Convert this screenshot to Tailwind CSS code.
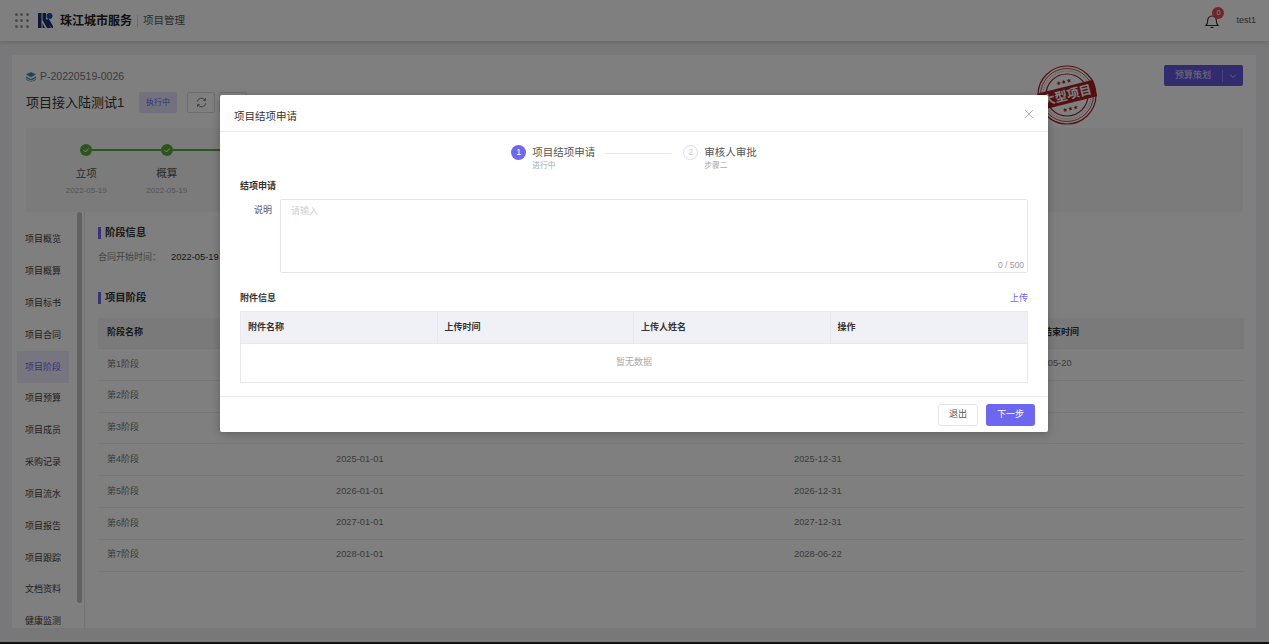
<!DOCTYPE html>
<html lang="zh-CN">
<head>
  <meta charset="UTF-8">
  <meta name="viewport" content="width=device-width, initial-scale=1.0">
  <title>项目管理</title>
  <script src="https://cdn.jsdelivr.net/npm/@tailwindcss/browser@4"></script>
</head>
<body class="relative h-[644px] overflow-hidden bg-[#f0f0f6] font-['Liberation_Sans','Noto_Sans_CJK_SC',sans-serif] text-[#333]">

  <!-- Top bar -->
  <header class="h-[41px] bg-white shadow-[0_1px_4px_rgba(0,0,0,0.15)] flex items-center pl-[15px] pr-[13px]">
    <div class="grid grid-cols-3 gap-[3px] w-[13px] mr-[10px]">
      <i class="w-[3px] h-[3px] rounded-full bg-[#999]"></i><i class="w-[3px] h-[3px] rounded-full bg-[#999]"></i><i class="w-[3px] h-[3px] rounded-full bg-[#999]"></i>
      <i class="w-[3px] h-[3px] rounded-full bg-[#999]"></i><i class="w-[3px] h-[3px] rounded-full bg-[#999]"></i><i class="w-[3px] h-[3px] rounded-full bg-[#999]"></i>
      <i class="w-[3px] h-[3px] rounded-full bg-[#999]"></i><i class="w-[3px] h-[3px] rounded-full bg-[#999]"></i><i class="w-[3px] h-[3px] rounded-full bg-[#999]"></i>
    </div>
    <svg class="w-[15px] h-[15px] mr-[7px]" viewBox="0 0 15 15">
      <path d="M0 0h3.500v15H0zM4.500 0H8v5.500L13 15H9L4.500 7zM4.500 10l2.500 5H4.500z" fill="#1c2f70"/>
      <path d="M7.500 8l3-2.500L15 13v2h-1z" fill="#1c2f70"/>
      <circle cx="11.500" cy="3" r="3" fill="#1c4fa8"/>
    </svg>
    <span class="text-[12px] font-bold text-[#222]">珠江城市服务</span>
    <span class="w-px h-[12px] bg-[#ddd] mx-[5px]"></span>
    <span class="text-[10.500px] text-[#555]">项目管理</span>
    <div class="ml-auto relative mr-[16px]">
      <svg class="w-[16px] h-[16px]" viewBox="0 0 16 16" fill="none" stroke="#333" stroke-width="1.100">
        <path d="M2 12.500c1.200-1 1.600-2 1.600-4.500 0-3 1.800-5 4.400-5s4.400 2 4.400 5c0 2.500.4 3.500 1.600 4.500z"/>
        <path d="M6.500 14.500h3"/>
      </svg>
      <span class="absolute -top-[6px] left-[8px] w-[12px] h-[12px] rounded-full bg-[#e5484d] text-white text-[7.500px] leading-[12px] text-center">0</span>
    </div>
    <span class="text-[9px] text-[#555]">test1</span>
  </header>

  <!-- Project card -->
  <main class="absolute left-[12px] top-[55px] w-[1244px] h-[573px] bg-white overflow-hidden">
    <div class="px-[14px] pt-[15px]">
      <div class="flex items-center h-[14px] text-[10.500px] text-[#777]">
        <svg class="w-[10px] h-[10px] mr-[4px]" viewBox="0 0 10 10"><path d="M5 0l5 2.600-5 2.600L0 2.600z" fill="#3b8fb0"/><path d="M0 4.500l5 2.600 5-2.600v1.400L5 8.500 0 5.900z" fill="#3b8fb0"/><path d="M0 6.800l5 2.600 5-2.600V8L5 10 0 8z" fill="#5aa5c2"/></svg>
        P-20220519-0026
      </div>
      <div class="flex items-center mt-[8px] h-[21px]">
        <h1 class="text-[13px] text-[#333] w-[113px]">项目接入陆测试1</h1>
        <span class="w-[38px] h-[21px] rounded-[2px] bg-[#e4e3fb] text-[#6c66f0] text-[8px] leading-[21px] text-center">执行中</span>
        <span class="ml-[10px] w-[28px] h-[21px] rounded-[2px] border border-[#ddd] flex items-center justify-center">
          <svg class="w-[11px] h-[11px]" viewBox="0 0 12 12" fill="none" stroke="#666" stroke-width="0.900"><path d="M1.200 5.200A4.800 4.800 0 0 1 10 3.500M10.800 6.800A4.800 4.800 0 0 1 2 8.500"/><path d="M10.300 1.200V3.700H7.800M1.700 10.800V8.300H4.200"/></svg>
        </span>
        <span class="ml-[4px] w-[28px] h-[21px] rounded-[2px] border border-[#ddd]"></span>
      </div>
      <!-- Stage progress -->
      <div class="mt-[15px] h-[84px] -mr-px bg-[#f6f6f8] flex pl-[20px] pt-[16px]">
        <div class="w-[80.500px] flex flex-col items-center">
          <div class="relative w-full flex justify-center">
            <span class="w-[12px] h-[12px] rounded-full bg-[#5aa83c] flex items-center justify-center"><svg class="w-[8px] h-[8px]" viewBox="0 0 8 8" fill="none" stroke="#fff"><path d="M1.500 4l2 2 3-3.500"/></svg></span>
            <span class="absolute left-[46px] top-[5px] w-[69px] h-[1.500px] bg-[#5aa83c]"></span>
          </div>
          <span class="mt-[10px] text-[10.500px] text-[#555]">立项</span>
          <span class="mt-[3px] text-[8px] text-[#aaa]">2022-05-19</span>
        </div>
        <div class="w-[80.500px] flex flex-col items-center">
          <div class="relative w-full flex justify-center">
            <span class="w-[12px] h-[12px] rounded-full bg-[#5aa83c] flex items-center justify-center"><svg class="w-[8px] h-[8px]" viewBox="0 0 8 8" fill="none" stroke="#fff"><path d="M1.500 4l2 2 3-3.500"/></svg></span>
            <span class="absolute left-[46px] top-[5px] w-[60px] h-[1.500px] bg-[#5aa83c]"></span>
          </div>
          <span class="mt-[10px] text-[10.500px] text-[#555]">概算</span>
          <span class="mt-[3px] text-[8px] text-[#aaa]">2022-05-19</span>
        </div>
      </div>
    </div>

    <div class="flex h-[416px] mt-[2px] pl-[5px]">
      <!-- Side menu -->
      <nav class="w-[52px] pt-[10px] text-[9px] text-[#444] shrink-0">
        <a class="h-[31.850px] flex items-center justify-center">项目概览</a>
        <a class="h-[31.850px] flex items-center justify-center">项目概算</a>
        <a class="h-[31.850px] flex items-center justify-center">项目标书</a>
        <a class="h-[31.850px] flex items-center justify-center">项目合同</a>
        <a class="h-[31.850px] flex items-center justify-center bg-[#eeedfd] text-[#6c66f0]">项目阶段</a>
        <a class="h-[31.850px] flex items-center justify-center">项目预算</a>
        <a class="h-[31.850px] flex items-center justify-center">项目成员</a>
        <a class="h-[31.850px] flex items-center justify-center">采购记录</a>
        <a class="h-[31.850px] flex items-center justify-center">项目流水</a>
        <a class="h-[31.850px] flex items-center justify-center">项目报告</a>
        <a class="h-[31.850px] flex items-center justify-center">项目跟踪</a>
        <a class="h-[31.850px] flex items-center justify-center">文档资料</a>
        <a class="h-[31.850px] flex items-center justify-center">健康监测</a>
      </nav>
      <div class="w-[5px] h-[391px] -mt-[2px] ml-[8px] rounded-full bg-[#c4c4c4] shrink-0"></div>
      <div class="w-px ml-[2px] -mt-[2px] bg-[#e6e6e6] shrink-0"></div>

      <section class="ml-[13px] w-[1146px]">
        <h2 class="mt-[13px] flex items-center h-[12px] text-[10.300px] font-bold text-[#333]"><i class="w-[3px] h-[12px] bg-[#6c66f0] mr-[4px]"></i>阶段信息</h2>
        <div class="mt-[13px] h-[12px] flex items-center text-[9px] text-[#888]">
          <span class="w-[73px]">合同开始时间：</span><span class="text-[9.300px] text-[#333]">2022-05-19</span>
        </div>
        <h2 class="mt-[28px] flex items-center h-[12px] text-[10.300px] font-bold text-[#333]"><i class="w-[3px] h-[12px] bg-[#6c66f0] mr-[4px]"></i>项目阶段</h2>
        <div class="mt-[14px] text-[9px] text-[#777]">
          <div class="grid grid-cols-[229px_458px_249px_210px] h-[31px] items-center bg-[#f5f5f7] font-bold text-[#333] border-b border-[#eee]">
            <span class="pl-[9px]">阶段名称</span><span class="pl-[9px]">开始时间</span><span></span><span class="pl-[9px]">结束时间</span>
          </div>
          <div class="grid grid-cols-[229px_458px_249px_210px] h-[31.800px] items-center border-b border-[#eee]">
            <span class="pl-[9px]">第1阶段</span><span class="pl-[9px] text-[9.300px]">2022-05-20</span><span></span><span class="-ml-[10px] text-[9.300px]">2022-05-20</span>
          </div>
          <div class="grid grid-cols-[229px_458px_249px_210px] h-[31.800px] items-center border-b border-[#eee]">
            <span class="pl-[9px]">第2阶段</span><span class="pl-[9px] text-[9.300px]">2023-01-01</span><span class="pl-[9px] text-[9.300px]">2023-12-31</span><span></span>
          </div>
          <div class="grid grid-cols-[229px_458px_249px_210px] h-[31.800px] items-center border-b border-[#eee]">
            <span class="pl-[9px]">第3阶段</span><span class="pl-[9px] text-[9.300px]">2024-01-01</span><span class="pl-[9px] text-[9.300px]">2024-12-31</span><span></span>
          </div>
          <div class="grid grid-cols-[229px_458px_249px_210px] h-[31.800px] items-center border-b border-[#eee]">
            <span class="pl-[9px]">第4阶段</span><span class="pl-[9px] text-[9.300px]">2025-01-01</span><span class="pl-[9px] text-[9.300px]">2025-12-31</span><span></span>
          </div>
          <div class="grid grid-cols-[229px_458px_249px_210px] h-[31.800px] items-center border-b border-[#eee]">
            <span class="pl-[9px]">第5阶段</span><span class="pl-[9px] text-[9.300px]">2026-01-01</span><span class="pl-[9px] text-[9.300px]">2026-12-31</span><span></span>
          </div>
          <div class="grid grid-cols-[229px_458px_249px_210px] h-[31.800px] items-center border-b border-[#eee]">
            <span class="pl-[9px]">第6阶段</span><span class="pl-[9px] text-[9.300px]">2027-01-01</span><span class="pl-[9px] text-[9.300px]">2027-12-31</span><span></span>
          </div>
          <div class="grid grid-cols-[229px_458px_249px_210px] h-[31.800px] items-center border-b border-[#eee]">
            <span class="pl-[9px]">第7阶段</span><span class="pl-[9px] text-[9.300px]">2028-01-01</span><span class="pl-[9px] text-[9.300px]">2028-06-22</span><span></span>
          </div>
        </div>
      </section>
    </div>

    <!-- Stamp -->
    <svg class="absolute left-[1025px] top-[10px] w-[60px] h-[60px]" viewBox="0 0 60 60" fill="none" stroke="#a81e22">
      <circle cx="30" cy="30" r="29" stroke-width="1.200"/>
      <circle cx="30" cy="30" r="26.500" stroke-width="0.800"/>
      <circle cx="30" cy="30" r="24" stroke-width="0.500" stroke-dasharray="1 1"/>
      <circle cx="30" cy="30" r="21" stroke-width="1.200"/>
      <g transform="rotate(-14 30 30)">
        <rect x="1" y="21.500" width="58" height="17" fill="#a81e22" stroke="none"/>
        <text x="30" y="34.500" text-anchor="middle" fill="#fff" stroke="none" font-size="12.500" font-family="'Noto Sans CJK SC',serif" font-weight="700">大型项目</text>
        <text x="30" y="18.500" text-anchor="middle" fill="#a81e22" stroke="none" font-size="6" font-family="'DejaVu Sans',sans-serif">★★★</text>
        <text x="30" y="46" text-anchor="middle" fill="#a81e22" stroke="none" font-size="6" font-family="'DejaVu Sans',sans-serif">★★★</text>
      </g>
    </svg>

    <!-- Split button -->
    <div class="absolute left-[1152px] top-[10px] w-[79px] h-[21px] rounded-[2px] bg-[#6259de] flex items-center text-white/80 text-[9px]">
      <span class="w-[58px] text-center">预算策划</span>
      <span class="w-px h-[12px] bg-white/30"></span>
      <svg class="w-[8px] h-[8px] ml-[6px]" viewBox="0 0 8 8" fill="none" stroke="#fff" stroke-opacity="0.700" stroke-width="0.800"><path d="M1 2.500l3 3 3-3"/></svg>
    </div>
  </main>

  <div class="absolute left-0 bottom-0 w-full h-[2px] bg-[#222]"></div>

  <!-- Modal overlay -->
  <div class="absolute inset-0 bg-black/50">
    <div class="absolute left-[220px] top-[95px] w-[828px] h-[337px] bg-white rounded-[2px] shadow-[0_2px_8px_rgba(0,0,0,0.25)] flex flex-col">
      <div class="h-[37px] shrink-0 border-b border-[#e8e8ee] flex items-center justify-between pl-[14px] pr-[14px]">
        <span class="mt-[8px] text-[10.500px] text-[#333]">项目结项申请</span>
        <svg class="w-[10px] h-[10px] mt-[2px]" viewBox="0 0 10 10" stroke="#aaa" stroke-width="0.900"><path d="M1 1l8 8M9 1l-8 8"/></svg>
      </div>

      <!-- Steps -->
      <div class="h-[47px] pt-[13px] flex justify-center shrink-0">
        <div class="flex items-start">
          <span class="w-[15px] h-[15px] rounded-full bg-[#6c66f0] text-white text-[9px] leading-[15px] text-center">1</span>
          <div class="ml-[6px]">
            <div class="text-[10.500px] leading-[15px] text-[#555]">项目结项申请</div>
            <div class="text-[7.700px] leading-[12px] text-[#aaa]">进行中</div>
          </div>
          <span class="w-[66px] h-px bg-[#e8e8ee] ml-[10px] mr-[12px] mt-[8px]"></span>
          <span class="w-[15px] h-[15px] rounded-full border border-[#dcdaf6] text-[#ccc] text-[9px] leading-[13px] text-center">2</span>
          <div class="ml-[6px]">
            <div class="text-[10.500px] leading-[15px] text-[#555]">审核人审批</div>
            <div class="text-[7.700px] leading-[12px] text-[#aaa]">步骤二</div>
          </div>
        </div>
      </div>

      <div class="px-[20px]">
        <div class="mt-[2px] h-[12px] flex items-center text-[9px] font-bold text-[#333]">结项申请</div>
        <div class="mt-[6px] flex">
          <label class="w-[32px] pt-[5px] text-right text-[9px] leading-[12px] text-[#555]">说明</label>
          <div class="relative w-[748px] ml-[8px] -mr-[8px] h-[74px] border border-[#e4e4ea] rounded-[2px] px-[10px] py-[5px] text-[9px] leading-[12px] text-[#d0d0d0]">
            请输入
            <span class="absolute right-[3px] bottom-[1px] text-[8.500px] text-[#999]">0 / 500</span>
          </div>
        </div>
        <div class="mt-[20px] h-[12px] flex items-center justify-between text-[9px]">
          <span class="font-bold text-[#333]">附件信息</span>
          <span class="text-[#6c66f0]">上传</span>
        </div>
        <div class="mt-[6px] border border-[#e8e8ee] text-[9px]">
          <div class="grid grid-cols-4 h-[32px] bg-[#f0f1f6] font-bold text-[#333] border-b border-[#e8e8ee]">
            <span class="flex items-center pl-[7px] border-r border-[#e8e8ee]">附件名称</span>
            <span class="flex items-center pl-[7px] border-r border-[#e8e8ee]">上传时间</span>
            <span class="flex items-center pl-[7px] border-r border-[#e8e8ee]">上传人姓名</span>
            <span class="flex items-center pl-[7px]">操作</span>
          </div>
          <div class="h-[38px] flex items-center justify-center text-[#aaa]">暂无数据</div>
        </div>
      </div>

      <!-- Footer -->
      <div class="mt-auto h-[36px] pt-[1px] border-t border-[#e8e8ee] flex items-center justify-end gap-[8px] px-[13px] text-[9px]">
        <button class="w-[40px] h-[22px] rounded-[3px] border border-[#e4e4ea] text-[#555]">退出</button>
        <button class="w-[49px] h-[22px] rounded-[3px] bg-[#6c66f0] text-white">下一步</button>
      </div>
    </div>
  </div>

</body>
</html>
